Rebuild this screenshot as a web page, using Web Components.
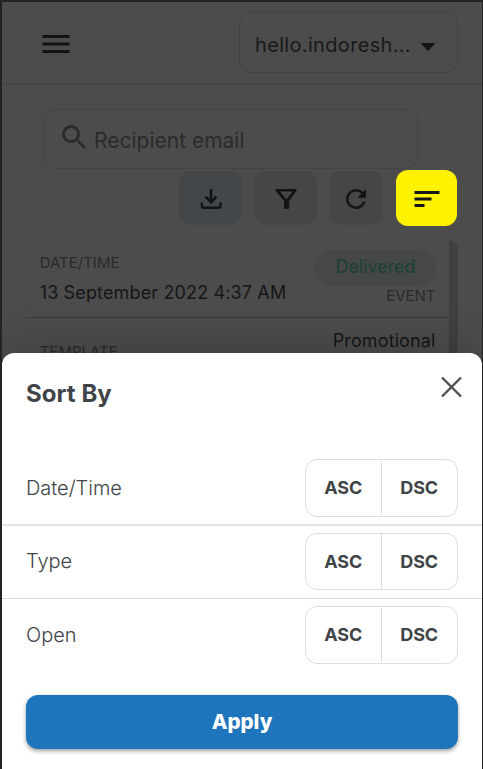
<!DOCTYPE html>
<html lang="en">
<head>
<meta charset="utf-8">
<title>Sort By</title>
<style>
html,body{margin:0;height:100%;overflow:hidden;background:#232325}
body{font-family:Inter,"Liberation Sans",sans-serif}
</style>
</head>
<body>
<app-screen>
  <app-header><account-select>hello.indoresh...</account-select></app-header>
  <search-field>Recipient email</search-field>
  <tool-bar>
    <tool-button style="--w:63px;--bg:#434749;--gap:12px"><svg width="30" height="30" viewBox="0 0 30 30" fill="none" stroke="#121314" stroke-width="2.5"><path d="M15 5v12.500M9.500 12.700l5.500 5.500 5.500-5.500M5.900 18.500v3.800q0 1.500 1.500 1.500h15.600q1.500 0 1.500-1.500v-3.800"/></svg></tool-button>
    <tool-button style="--w:63px;--bg:#464646;--gap:12px"><svg width="30" height="30" viewBox="0 0 30 30"><path fill="#121314" fill-rule="evenodd" d="M4.500 5h21v1.800L18.200 16.700V23.500q0 1.500-1.500 1.500h-1.700q-2 0-2-1.500V16.700L4.500 6.800zM9 7.500l6.300 8L21.500 7.500z"/></svg></tool-button>
    <tool-button style="--w:54px;--bg:#464646;--gap:13px"><svg width="30" height="30" viewBox="0 0 24 24"><path fill="#121314" d="M17.650 6.350A7.960 7.960 0 0 0 12 4a8 8 0 1 0 7.730 10h-2.080A6 6 0 1 1 12 6c1.660 0 3.140.690 4.220 1.780L13 11h7V4z"/></svg></tool-button>
    <tool-button style="--w:61px;--h:56px;--bg:#fff200;--gap:0px"><svg width="30" height="30" viewBox="0 0 30 30"><path fill="#15171b" d="M2.500 7h25v3h-25zM2.500 13.500h17v3h-17zM2.500 20h10v3h-10z"/></svg></tool-button>
  </tool-bar>
  <record-list>
    <record-row>
      <span slot="label">DATE/TIME</span><span slot="value">13 September 2022 4:37 AM</span>
      <status-chip slot="status">Delivered</status-chip><span slot="kind">EVENT</span>
    </record-row>
    <template-row><span slot="label">TEMPLATE</span><span slot="value">Promotional</span></template-row>
  </record-list>
  <sort-sheet slot="overlay">
    <span slot="title">Sort By</span>
    <sort-option class="first">Date/Time</sort-option>
    <sort-option class="middle">Type</sort-option>
    <sort-option class="last">Open</sort-option>
    <apply-button slot="action">Apply</apply-button>
  </sort-sheet>
</app-screen>
<script>
const define=(name,html)=>customElements.define(name,class extends HTMLElement{
  constructor(){super();const t=document.createElement('template');t.innerHTML=html;
    this.attachShadow({mode:'open'}).append(t.content.cloneNode(true));}
});

define('app-screen',`<style>
:host{display:block;box-sizing:border-box;position:relative;width:483px;height:769px;overflow:hidden;border:solid #232325;border-width:2px 1px 0 2px;background:#4c4c4c}
</style><slot></slot><slot name="overlay"></slot>`);

define('app-header',`<style>
:host{display:flex;box-sizing:border-box;height:83px;border-bottom:1px solid #414141;justify-content:space-between;align-items:flex-start;padding:10px 24px 0 40px}
svg{display:block;margin-top:22px}
</style><svg width="28" height="20" viewBox="0 0 28 20"><path fill="#121314" d="M.4 1h27.200v3H.4zM.4 8.600h27.200v2.800H.4zM.4 16h27.200v3H.4z"/></svg><slot></slot>`);

define('account-select',`<style>
:host{display:flex;box-sizing:border-box;width:219px;height:61px;border:1px solid #434343;border-radius:12px;padding:0 21px 0 15px;align-items:center;justify-content:space-between;font-size:20px;line-height:24px;color:#18191a;letter-spacing:.33px;white-space:nowrap}
span{padding-top:4px}svg{margin-top:9px}
</style><span><slot></slot></span><svg width="16" height="8" viewBox="0 0 16 8"><path fill="#121314" d="M.5 0h15L8 8z"/></svg>`);

define('search-field',`<style>
:host{display:flex;box-sizing:border-box;width:375px;height:60px;margin:24px 0 0 41px;border:1px solid #434343;border-radius:12px;align-items:center;padding-left:14px;gap:3px;color:#2a2b2c;font-size:21px;line-height:26px}
svg{margin-top:-4px}span{padding-top:4px}
</style><svg width="33" height="33" viewBox="0 0 24 24"><path fill="#2a2b2c" d="M15.500 14h-.790l-.280-.270A6.500 6.500 0 1 0 13.730 14.430l.270.280v.790l5 4.990L20.490 19zM9.500 14a4.500 4.500 0 1 1 0-9 4.500 4.500 0 0 1 0 9z"/></svg><span><slot></slot></span>`);

define('tool-bar',`<style>
:host{display:flex;height:56px;margin-top:1px;justify-content:flex-end;align-items:center;padding-right:25px}
</style><slot></slot>`);

define('tool-button',`<style>
:host{display:flex;flex:none;box-sizing:border-box;width:var(--w);height:var(--h,54px);margin-right:var(--gap);align-items:center;justify-content:center;border-radius:12px;background:var(--bg)}
::slotted(svg){margin-top:1px}
</style><slot></slot>`);

define('record-list',`<style>
:host{display:flex;box-sizing:border-box;width:433px;height:180px;margin:13px 0 0 24px}
main{flex:none;box-sizing:border-box;width:422px;border:1px solid #484848;border-right:0;border-radius:12px 0 0 0}
i{width:9px;margin:1px 0 0 1px;border-radius:0 9px 0 0;background:#404040}
</style><main><slot></slot></main><i></i>`);

define('record-row',`<style>
:host{display:flex;box-sizing:border-box;height:78px;padding:10px 12px 0 12.700px;justify-content:space-between;border-bottom:1px solid #3b3b3b;white-space:nowrap}
section{display:flex;flex-direction:column;font-size:15px;line-height:18px;color:#292a2b}
.left{padding-top:4px}.right{align-items:flex-end}
.value{font-size:18px;line-height:22px;color:#151617;margin-top:10px;letter-spacing:.140px}
.kind{margin-top:1px;padding-right:.5px}
</style><section class="left"><slot name="label"></slot><div class="value"><slot name="value"></slot></div></section><section class="right"><slot name="status"></slot><div class="kind"><slot name="kind"></slot></div></section>`);

define('status-chip',`<style>
:host{display:flex;width:121px;height:36px;border-radius:18px;background:#454847;align-items:center;justify-content:center;font-size:18px;line-height:22px;color:#1a4030}
span{margin-top:-2px;letter-spacing:-.05px}
</style><span><slot></slot></span>`);

define('template-row',`<style>
:host{display:flex;justify-content:space-between;padding:12px 12.500px 0 12.700px;font-size:15px;line-height:18px;color:#292a2b}
.label{padding-top:13px}.value{font-size:18px;line-height:22px;color:#151617;letter-spacing:.12px}
</style><div class="label"><slot name="label"></slot></div><div class="value"><slot name="value"></slot></div>`);

define('sort-sheet',`<style>
:host{display:block;box-sizing:border-box;position:absolute;left:0;right:0;bottom:0;height:416px;border-radius:12px 12px 0 0;background:#fff;color:#404447;box-shadow:0 0 45px rgba(0,0,0,.24)}
header{display:flex;box-sizing:border-box;height:99px;padding:23px 20px 0 24px;justify-content:space-between;align-items:flex-start;font-size:24px;line-height:36px;font-weight:650;letter-spacing:.05px}
footer{padding:24px 24px 0}
</style><header><slot name="title"></slot><svg width="21" height="22" viewBox="0 0 21 22" fill="none" stroke="#4d4f51" stroke-width="2.400"><path d="M1 1.500l19 19M20 1.500l-19 19"/></svg></header><slot></slot><footer><slot name="action"></slot></footer>`);

define('sort-option',`<style>
:host{display:flex;box-sizing:border-box;height:73px;border-bottom:1px solid #dcdddd;align-items:flex-start;justify-content:space-between;padding:7px 24px 0;font-size:20px;line-height:58px}
:host(.first){height:74px;border-bottom:2px solid #e3e4e4}
:host(.last){border-bottom-color:transparent;height:72px}
span{letter-spacing:-.03px;font-weight:360}
div{display:flex;box-sizing:border-box;width:153px;height:58px;border:1px solid #dcdddd;border-radius:12px;align-items:center;font-size:18px;line-height:56px;font-weight:650}
:host(.middle) div{height:57px;line-height:55px}
:host(.middle) span{line-height:57px}
b{flex:1;font-weight:inherit;text-align:center;letter-spacing:-.1px;text-indent:-.7px}
:host(.middle) b{margin-top:-1px}
i{width:1px;height:54px;background:#dcdddd}
:host(.middle) i{height:55px}
</style><span><slot></slot></span><div><b>ASC</b><i></i><b>DSC</b></div>`);

define('apply-button',`<style>
:host{display:flex;box-sizing:border-box;height:54px;padding-bottom:2px;border-radius:12px;align-items:center;justify-content:center;background:#1e75bb;color:#fff;font-size:20.500px;font-weight:800;box-shadow:0 2px 4px rgba(0,0,0,.38)}
</style><slot></slot>`);
</script>
</body>
</html>
